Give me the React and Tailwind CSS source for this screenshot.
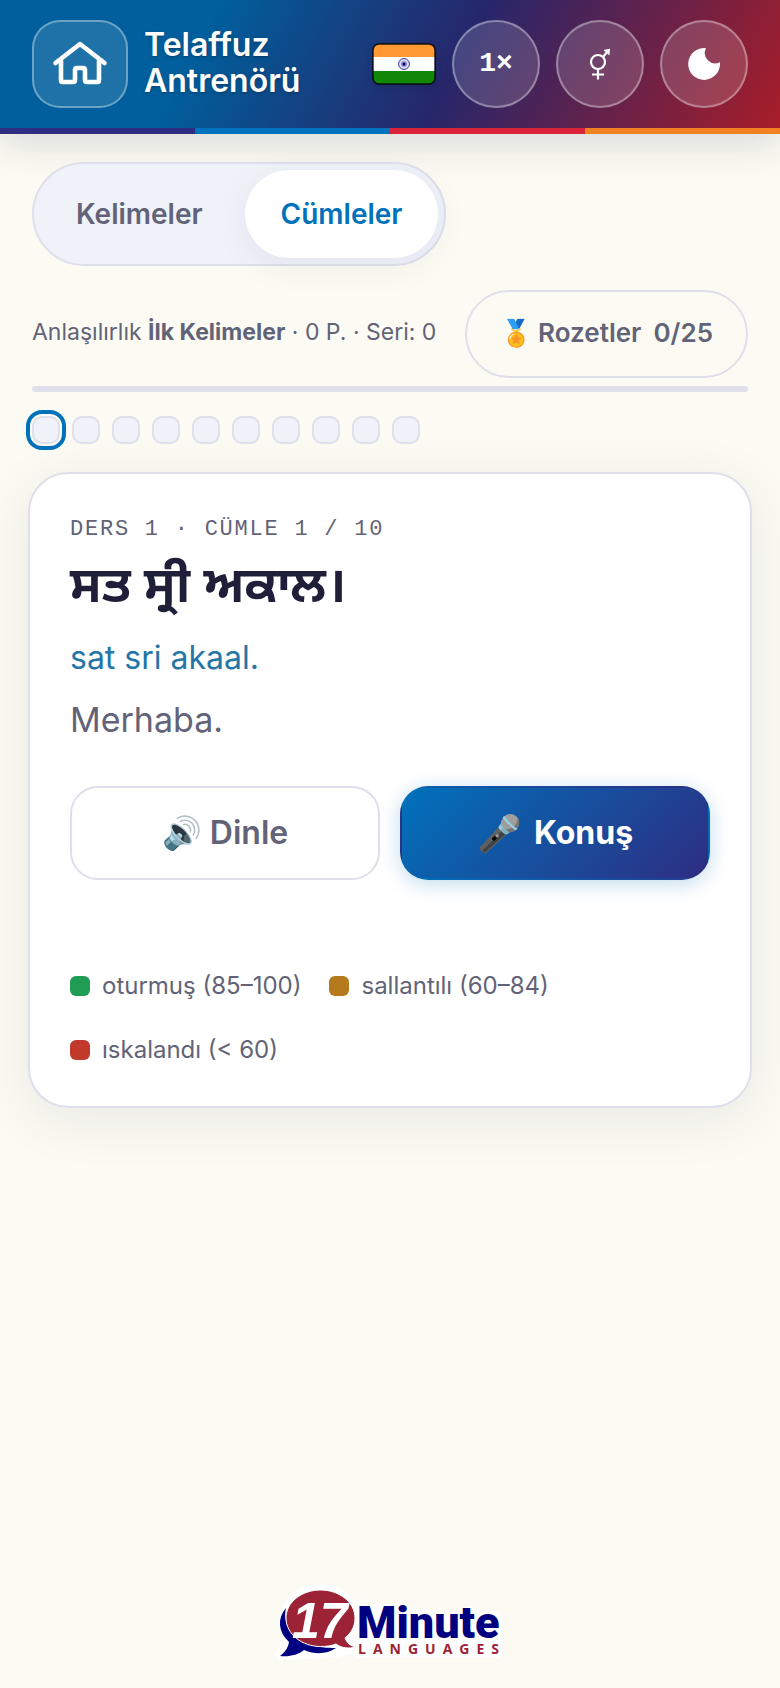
import { useState } from "react";

const TABS = ["Kelimeler", "Cümleler"];

const LEGEND = [
  { label: "oturmuş (85–100)", color: "bg-[#1f9d55]" },
  { label: "sallantılı (60–84)", color: "bg-[#b47a1c]" },
  { label: "ıskalandı (< 60)", color: "bg-[#c0392b]" }
];

const SENTENCE_COUNT = 10;

function HomeIcon() {
  return (
    <svg viewBox="0 0 56 56" className="h-14 w-14" fill="none" stroke="currentColor" strokeWidth="4.6" strokeLinecap="round" strokeLinejoin="round" aria-hidden="true">
      <path d="M3.500 27 28 8l24.500 19" />
      <path d="M9 25v19.500q0 1.500 1.500 1.500h10.500q2 0 2-2V34q0-2 2-2h6q2 0 2 2v10q0 2 2 2h10.500q1.500 0 1.500-1.500V25" />
    </svg>
  );
}

function MoonIcon() {
  return (
    <svg viewBox="0 0 32 32" className="h-8 w-8" fill="currentColor" aria-hidden="true">
      <path d="M18 .2A15.900 15.900 0 1 0 31.900 14.200 10.400 10.400 0 0 1 18 .2Z" />
    </svg>
  );
}

function GenderIcon() {
  return (
    <svg viewBox="0 0 24 32" className="h-8 w-6" fill="none" stroke="currentColor" strokeWidth="2.2" aria-hidden="true">
      <circle cx="10" cy="14" r="7" />
      <path d="M15 9l5-6M10 21v10.500M4 26.500h12" />
      <path d="M15.500 2 22 .8l-.6 6.600Z" fill="currentColor" stroke="none" />
    </svg>
  );
}

function IndiaFlag() {
  return (
    <svg viewBox="0 0 64 42" className="h-[42px] w-16 shrink-0 drop-shadow-md" role="img" aria-label="Hindistan">
      <clipPath id="flag-clip">
        <rect x="1" y="1" width="62" height="40" rx="6" />
      </clipPath>
      <g clipPath="url(#flag-clip)">
        <rect width="64" height="14" fill="#ff9933" />
        <rect y="14" width="64" height="14" fill="#fff" />
        <rect y="28" width="64" height="14" fill="#138808" />
      </g>
      <circle cx="32" cy="21" r="5.500" fill="#dcdcf0" stroke="#000080" strokeOpacity="0.75" />
      <circle cx="32" cy="21" r="3" fill="#8f8fc8" />
      <circle cx="32" cy="21" r="1.500" fill="#000080" />
      <rect x="1" y="1" width="62" height="40" rx="6" fill="none" stroke="#000" strokeOpacity="0.85" strokeWidth="1.500" />
    </svg>
  );
}

function RoundButton({ label, children }) {
  return (
    <button
      type="button"
      aria-label={label}
      className="flex h-22 w-22 shrink-0 items-center justify-center rounded-full border-2 border-white/35 bg-white/15 font-['Liberation_Mono',monospace] text-[28px] font-bold text-white"
    >
      {children}
    </button>
  );
}

function Logo() {
  return (
    <svg viewBox="0 0 236 84" className="h-21 w-59" role="img" aria-label="17 Minute Languages">
      <g stroke="#fff" strokeWidth="12" strokeLinejoin="round" fill="#fff">
        <ellipse cx="48" cy="38" rx="34" ry="28" />
        <path d="M10 74 22 54 80 60 80 68 60 72Z" />
        <path d="M88 30H132L140 36H192L198 32 206 38H224V72H88Z" />
      </g>
      <path d="M14 28C5 38 6 52 17 62c-1 6-4 10-9 14 9 1 18-1 24-6 12 5 23 4 32-2-18 0-36-3-45-16-5-7-7-15-5-24Z" fill="#000080" />
      <path d="M48.500 10C67 10 83 22 83 38c0 9-4 15-10 20 2 5 5 8 11 9-7 2-15 1-20-3-5 2-10 2.500-15.500 2.500C30 66.500 14 54 14 38S30 10 48.500 10Z" fill="#9b2335" stroke="#fff" strokeWidth="1" />
      <text x="20" y="58" fontSize="50" fontWeight="700" fontStyle="italic" fontFamily="Liberation Sans, sans-serif" fill="#fff">17</text>
      <text x="85" y="58" fontSize="45" fontWeight="900" fontFamily="Roboto, sans-serif" fill="#000080">Minute</text>
      <text x="86" y="74" fontSize="14" fontWeight="700" letterSpacing="7" fontFamily="Open Sans, sans-serif" fill="#9b2335">LANGUAGES</text>
    </svg>
  );
}

export default function App() {
  const [tab, setTab] = useState("Cümleler");
  const [current, setCurrent] = useState(0);

  return (
    <div className="flex min-h-screen flex-col bg-[#fbfbf3] font-[Inter,sans-serif] text-[#626378]">
      <header className="shadow-[0_8px_36px_rgba(30,30,60,0.16)]">
        <div className="flex items-center gap-4 bg-[linear-gradient(118deg,#005f9c_0%,#005f9c_26%,#27266a_58%,#a81d28_100%)] px-8 py-5 text-white">
          <button
            type="button"
            aria-label="Ana sayfa"
            className="flex h-22 w-24 shrink-0 items-center justify-center rounded-[28px] border-2 border-white/35 bg-white/12"
          >
            <HomeIcon />
          </button>
          <h1 className="min-w-0 flex-1 pb-[2px] text-[32px] leading-9 font-semibold text-shadow-md">
            Telaffuz Antrenörü
          </h1>
          <IndiaFlag />
          <RoundButton label="Hız">1×</RoundButton>
          <RoundButton label="Ses">
            <GenderIcon />
          </RoundButton>
          <RoundButton label="Koyu tema">
            <MoonIcon />
          </RoundButton>
        </div>
        <div className="grid h-[6px] grid-cols-4">
          <span className="bg-[#2e2d82]" />
          <span className="bg-[#0072bc]" />
          <span className="bg-[#da2337]" />
          <span className="bg-[#f08224]" />
        </div>
      </header>

      <main className="px-7 pt-7">
        <div className="px-1">
          <div className="inline-flex gap-[6px] rounded-full border-2 border-[#dfdfec] bg-[#eff2f9] p-[6px] align-top">
            {TABS.map((name) => (
              <button
                key={name}
                type="button"
                aria-pressed={tab === name}
                onClick={() => setTab(name)}
                className={
                  tab === name
                    ? "h-22 rounded-full bg-white px-9 text-[28px] font-semibold text-[#0072bc] shadow-[0_8px_36px_rgba(30,30,60,0.06)]"
                    : "h-22 rounded-full px-9 text-[28px] font-semibold"
                }
              >
                {name}
              </button>
            ))}
          </div>

          <div className="mt-6 flex items-center justify-between gap-4">
            <p className="pb-1 text-[23px] leading-8">
              Anlaşılırlık <strong>İlk Kelimeler</strong> · 0 P. · Seri: 0
            </p>
            <button
              type="button"
              className="flex h-22 shrink-0 items-center gap-3 rounded-full border-2 border-[#dfdfec] px-[33px] pb-1 text-[26px] font-semibold"
            >
              <span>🏅 Rozetler</span>
              <span>0/25</span>
            </button>
          </div>

          <div className="mt-2 h-[6px] rounded-full bg-[#dfdfec]" />

          <div className="mt-6 flex gap-3">
            {Array.from({ length: SENTENCE_COUNT }, (_, index) => (
              <button
                key={index}
                type="button"
                aria-label={`Cümle ${index + 1}`}
                onClick={() => setCurrent(index)}
                className={
                  index === current
                    ? "h-7 w-7 rounded-[10px] border-2 border-[#dfdfec] bg-[#eff2f9] outline-4 outline-offset-2 outline-[#0072bc]"
                    : "h-7 w-7 rounded-[10px] border-2 border-[#dfdfec] bg-[#eff2f9]"
                }
              />
            ))}
          </div>
        </div>

        <section className="mt-7 rounded-[40px] border-2 border-[#dfdfec] bg-white p-10 pb-9 shadow-[0_12px_56px_rgba(30,30,60,0.08)]">
          <p className="font-['Liberation_Mono',monospace] text-[22px] leading-8 tracking-[0.08em] uppercase">
            Ders 1 · Cümle 1 / 10
          </p>
          <h2
            lang="pa"
            className="mt-3 font-['Noto_Sans_Gurmukhi','Mukta_Mahee','Lohit_Gurmukhi','FreeSans',sans-serif] text-[50px] leading-16 font-bold text-[#1f1f3a]"
          >
            ਸਤ ਸ੍ਰੀ ਅਕਾਲ।
          </h2>
          <p className="mt-3 text-[32px] leading-12 text-[#2576a8]">sat sri akaal.</p>
          <p className="mt-[14px] text-[34px] leading-12">Merhaba.</p>

          <div className="mt-[42px] grid grid-cols-2 gap-5">
            <button
              type="button"
              className="flex h-[94px] items-center justify-center gap-2 rounded-[28px] border-2 border-[#dfdfec] text-[32px] font-semibold"
            >
              <span>🔊</span>
              <span>Dinle</span>
            </button>
            <button
              type="button"
              className="flex h-[94px] items-center justify-center gap-3 rounded-[28px] border-2 border-transparent bg-[linear-gradient(135deg,#0072bc,#2e2d82)] text-[32px] font-bold text-white shadow-[0_4px_20px_rgba(0,114,188,0.25)]"
            >
              <span className="text-4xl">🎤</span>
              <span>Konuş</span>
            </button>
          </div>

          <ul className="mt-[86px] flex flex-wrap gap-x-7 gap-y-6 text-2xl leading-10">
            {LEGEND.map((item) => (
              <li key={item.label} className="flex items-center gap-3">
                <span className={`h-5 w-5 rounded-md ${item.color}`} />
                {item.label}
              </li>
            ))}
          </ul>
        </section>
      </main>

      <footer className="mt-auto flex justify-center pb-6">
        <Logo />
      </footer>
    </div>
  );
}
